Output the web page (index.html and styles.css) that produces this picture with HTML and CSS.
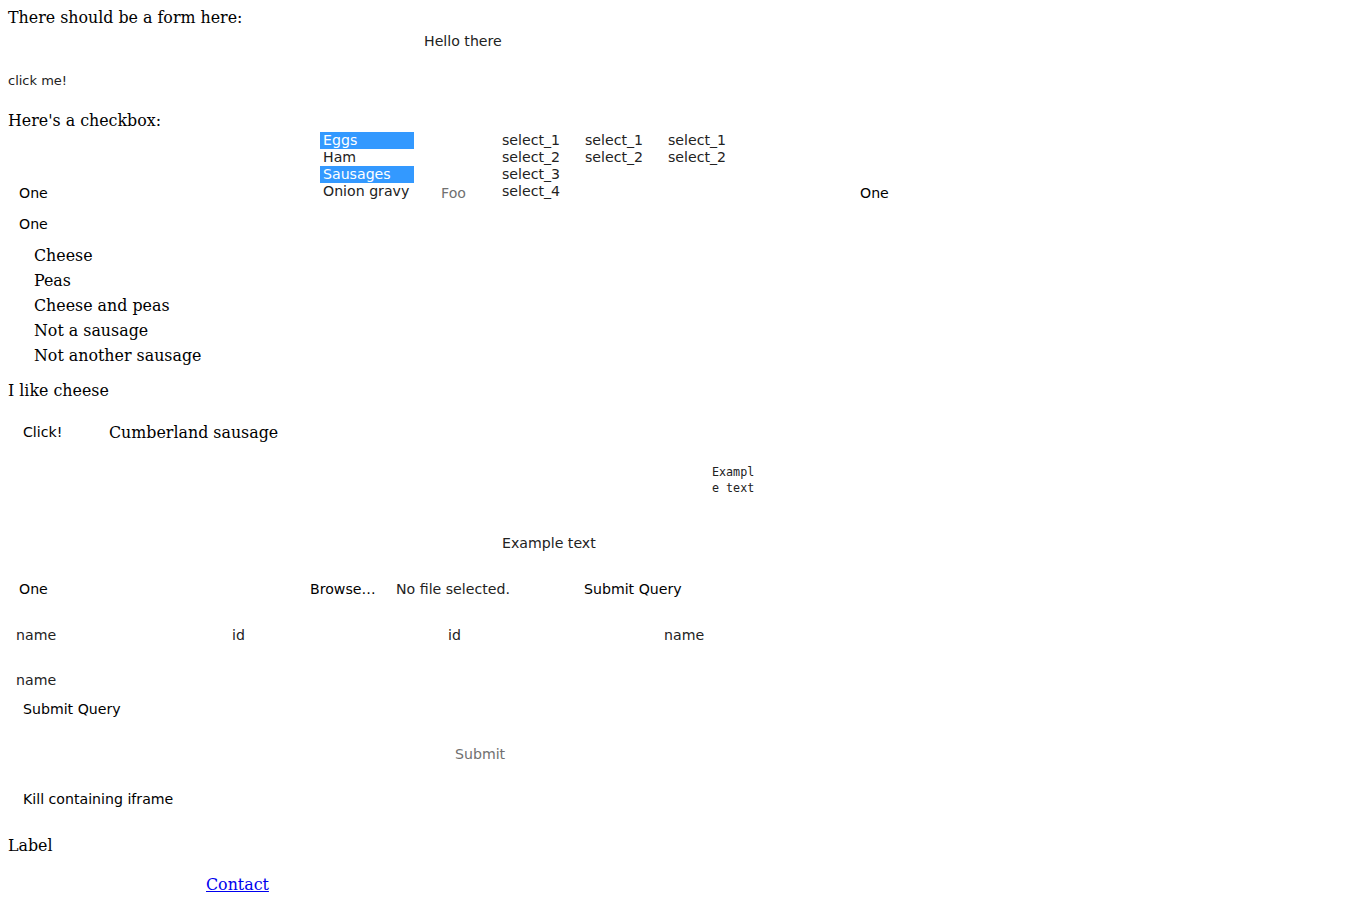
FILE: index.html
```html
<!DOCTYPE html>
<html>
<head>
<meta charset="utf-8">
<title>Form page</title>
<link rel="stylesheet" href="styles.css">
</head>
<body>
<div class="page">
  <div class="row r-title serif">There should be a form here:</div>
  <div class="row r-hello ctl"><span class="pad-hello">Hello there</span></div>
  <div class="row r-click small">click me!</div>
  <div class="row r-check serif">Here's a checkbox:</div>

  <div class="row r-selects ctl">
    <div class="cell c-one"><span class="bottom-line">One</span></div>
    <div class="cell c-list">
      <div class="opt sel">Eggs</div>
      <div class="opt">Ham</div>
      <div class="opt sel">Sausages</div>
      <div class="opt">Onion gravy</div>
    </div>
    <div class="cell c-foo"><span class="bottom-line dim">Foo</span></div>
    <div class="cell c-s1">
      <div class="opt2">select_1</div>
      <div class="opt2">select_2</div>
      <div class="opt2">select_3</div>
      <div class="opt2">select_4</div>
    </div>
    <div class="cell c-s2">
      <div class="opt2">select_1</div>
      <div class="opt2">select_2</div>
    </div>
    <div class="cell c-s3">
      <div class="opt2">select_1</div>
      <div class="opt2">select_2</div>
    </div>
    <div class="cell c-one2"><span class="bottom-line">One</span></div>
  </div>

  <div class="row r-one ctl">One</div>

  <ul class="checks serif">
    <li>Cheese</li>
    <li>Peas</li>
    <li>Cheese and peas</li>
    <li>Not a sausage</li>
    <li>Not another sausage</li>
  </ul>

  <div class="row r-like serif">I like cheese</div>

  <div class="row r-clickbtn">
    <span class="ctl c-clickbtn">Click!</span>
    <span class="serif">Cumberland sausage</span>
  </div>

  <div class="row r-mono mono"><div class="mono-box">Exampl<br>e text</div></div>

  <div class="row r-example ctl soft">Example text</div>

  <div class="row r-file ctl">
    <span class="f-one">One</span>
    <span class="f-browse">Browse…</span>
    <span class="f-none">No file selected.</span>
    <span>Submit Query</span>
  </div>

  <div class="row r-names ctl soft">
    <span class="n-cell">name</span>
    <span class="n-cell">id</span>
    <span class="n-cell">id</span>
    <span class="n-cell">name</span>
  </div>

  <div class="row r-name2 ctl soft">name</div>
  <div class="row r-submitq ctl">Submit Query</div>
  <div class="row r-submit ctl dim">Submit</div>
  <div class="row r-kill ctl">Kill containing iframe</div>
  <div class="row r-label serif">Label</div>
  <div class="row r-contact serif"><a href="#" class="contact">Contact</a></div>
</div>
</body>
</html>
```

FILE: styles.css
```css
html, body {
  margin: 0;
  padding: 0;
  background: #ffffff;
}
body {
  padding: 8px;
  color: #000000;
}
.page {
  display: flex;
  flex-direction: column;
}
.serif {
  font-family: "DejaVu Serif", "Liberation Serif", serif;
  font-size: 15.85px;
  color: #000;
}
.ctl {
  font-family: "DejaVu Sans", "Liberation Sans", sans-serif;
  font-size: 14.15px;
  color: #000;
}
.soft {
  color: #222;
}
.dim {
  color: #707070;
}
.small {
  font-family: "DejaVu Sans", "Liberation Sans", sans-serif;
  font-size: 13px;
  color: #222;
}
.mono {
  font-family: "DejaVu Sans Mono", "Liberation Mono", monospace;
  font-size: 11.7px;
  color: #222;
}
.row {
  white-space: nowrap;
}
.r-title { height: 19px; line-height: 19px; }
.r-hello { height: 28px; line-height: 28px; color: #222; }
.pad-hello { padding-left: 416px; }
.r-click { height: 53px; line-height: 52px; }
.r-check { height: 24px; line-height: 26px; }

.r-selects {
  display: flex;
  height: 70px;
  align-items: flex-start;
}
.cell { flex: none; }
.bottom-line {
  display: block;
  line-height: 18px;
}
.c-one, .c-foo, .c-one2 {
  align-self: flex-end;
}
.c-one { width: 301px; padding-left: 11px; }
.c-list { width: 94px; }
.opt {
  height: 17px;
  line-height: 17px;
  padding-left: 3px;
  color: #222;
}
.opt.sel {
  background: #3399ff;
  color: #ffffff;
}
.c-foo { width: 61px; padding-left: 27px; }
.opt2 {
  height: 17px;
  line-height: 17px;
  color: #222;
}
.c-s1 { width: 83px; }
.c-s2 { width: 83px; }
.c-s3 { width: 192px; }

.r-one {
  height: 36px;
  line-height: 36px;
  margin-top: 4px;
  padding-left: 11px;
}
.checks {
  list-style: none;
  margin: 0;
  padding: 0 0 0 26px;
  margin-top: 1px;
}
.checks li {
  height: 25px;
  line-height: 25px;
}
.r-like { height: 44px; line-height: 46px; }
.r-clickbtn {
  display: flex;
  align-items: center;
  height: 40px;
}
.c-clickbtn {
  width: 86px;
  padding-left: 15px;
}
.r-mono {
  height: 68px;
  padding-top: 13px;
  box-sizing: border-box;
}
.mono-box {
  padding-left: 704px;
  line-height: 15.5px;
}
.r-example {
  height: 46px;
  line-height: 46px;
  padding-left: 494px;
}
.r-file {
  display: flex;
  height: 46px;
  line-height: 46px;
}
.f-one { width: 291px; padding-left: 11px; }
.f-browse { width: 86px; }
.f-none { width: 188px; color: #222; }
.r-names {
  display: flex;
  height: 46px;
  line-height: 46px;
}
.n-cell {
  width: 208px;
  padding-left: 8px;
}
.r-name2 {
  height: 32px;
  line-height: 32px;
  margin-top: 6px;
  padding-left: 8px;
}
.r-submitq {
  height: 26px;
  line-height: 26px;
  padding-left: 15px;
}
.r-submit {
  height: 64px;
  line-height: 64px;
  padding-left: 447px;
}
.r-kill {
  height: 26px;
  line-height: 26px;
  padding-left: 15px;
}
.r-label { height: 66px; line-height: 68px; }
.r-contact {
  height: 12px;
  line-height: 14px;
  padding-left: 198px;
}
.contact {
  color: #0000ee;
  text-decoration: underline;
}
```
